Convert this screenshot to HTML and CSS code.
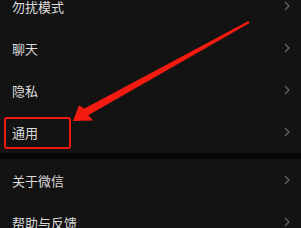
FILE: index.html
```html
<!DOCTYPE html>
<html lang="zh">
<head>
<meta charset="utf-8">
<link rel="stylesheet" href="styles.css">
</head>
<body>
<div class="page">
  <div class="list">
    <div class="group">
      <div class="row"><span class="label">勿扰模式</span><svg class="chev" viewBox="0 0 6 10"><path d="M1 1 L5 5 L1 9"/></svg></div>
      <div class="row"><span class="label">聊天</span><svg class="chev" viewBox="0 0 6 10"><path d="M1 1 L5 5 L1 9"/></svg></div>
      <div class="row"><span class="label">隐私</span><svg class="chev" viewBox="0 0 6 10"><path d="M1 1 L5 5 L1 9"/></svg></div>
      <div class="row"><span class="label">通用</span><svg class="chev" viewBox="0 0 6 10"><path d="M1 1 L5 5 L1 9"/></svg><div class="highlight"></div></div>
    </div>
    <div class="sep"></div>
    <div class="group">
      <div class="row"><span class="label">关于微信</span><svg class="chev" viewBox="0 0 6 10"><path d="M1 1 L5 5 L1 9"/></svg></div>
      <div class="row"><span class="label">帮助与反馈</span><svg class="chev" viewBox="0 0 6 10"><path d="M1 1 L5 5 L1 9"/></svg></div>
    </div>
  </div>
  <svg class="arrow" viewBox="0 0 301 228" width="301" height="228">
    <polygon points="248.4,20.9 84.5,108.6 79,105.5 73,121 93.5,120.5 88.2,115.2 249.6,23.1"/>
  </svg>
</div>
</body>
</html>
```

FILE: styles.css
```css
html, body {
  margin: 0;
  padding: 0;
  background: #121212;
}
.page {
  position: relative;
  width: 301px;
  height: 228px;
  overflow: hidden;
  font-family: "Noto Sans CJK SC", "Noto Sans", sans-serif;
}
.list {
  display: flex;
  flex-direction: column;
  margin-top: -15px;
}
.group {
  display: flex;
  flex-direction: column;
  background: #131313;
}
.row {
  position: relative;
  height: 42px;
  display: flex;
  align-items: center;
  justify-content: space-between;
  padding: 0 11px 0 12px;
}
.label {
  color: #dcdcdc;
  font-size: 13px;
  line-height: 1;
}
.chev {
  width: 6px;
  height: 10px;
  fill: none;
  stroke: #6c6c6c;
  stroke-width: 1.1;
}
.sep {
  height: 6px;
  background: #070707;
}
.highlight {
  position: absolute;
  left: 4px;
  top: 6px;
  width: 67px;
  height: 32px;
  box-sizing: border-box;
  border: 2.5px solid #ec1a10;
  border-radius: 3px;
}
.arrow {
  position: absolute;
  left: 0;
  top: 0;
  fill: #f41c10;
}
```
